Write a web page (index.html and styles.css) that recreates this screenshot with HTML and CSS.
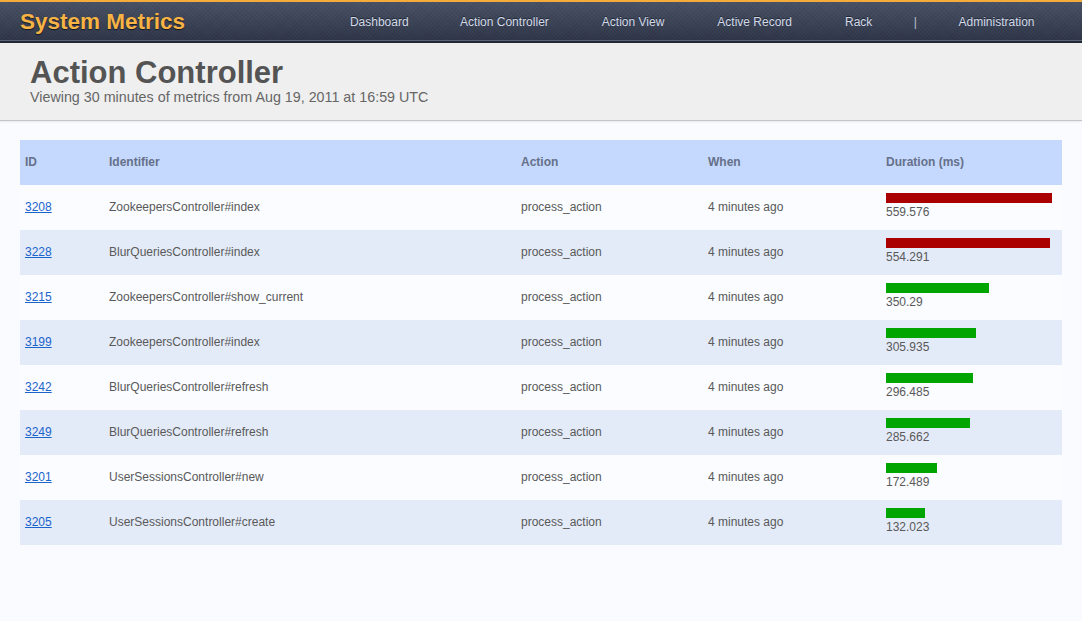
FILE: index.html
```html
<!DOCTYPE html>
<html>
<head>
<meta charset="utf-8">
<title>System Metrics</title>
<link rel="stylesheet" href="styles.css">
</head>
<body>
<div class="topbar">
  <div class="logo">System Metrics</div>
  <nav class="nav">
    <a href="#">Dashboard</a>
    <a href="#">Action Controller</a>
    <a href="#">Action View</a>
    <a href="#">Active Record</a>
    <a href="#">Rack</a>
    <span class="sep">|</span>
    <a href="#">Administration</a>
  </nav>
</div>
<header class="page-header">
  <h1>Action Controller</h1>
  <p>Viewing 30 minutes of metrics from Aug 19, 2011 at 16:59 UTC</p>
</header>
<main class="content">
  <table class="metrics">
    <thead>
      <tr>
        <th class="c-id">ID</th>
        <th class="c-ident">Identifier</th>
        <th class="c-action">Action</th>
        <th class="c-when">When</th>
        <th class="c-dur">Duration (ms)</th>
      </tr>
    </thead>
    <tbody>
      <tr>
        <td><a href="#">3208</a></td>
        <td>ZookeepersController#index</td>
        <td>process_action</td>
        <td>4 minutes ago</td>
        <td class="dur"><div class="bar slow" style="width:166px"></div><div class="val">559.576</div></td>
      </tr>
      <tr>
        <td><a href="#">3228</a></td>
        <td>BlurQueriesController#index</td>
        <td>process_action</td>
        <td>4 minutes ago</td>
        <td class="dur"><div class="bar slow" style="width:164px"></div><div class="val">554.291</div></td>
      </tr>
      <tr>
        <td><a href="#">3215</a></td>
        <td>ZookeepersController#show_current</td>
        <td>process_action</td>
        <td>4 minutes ago</td>
        <td class="dur"><div class="bar" style="width:103px"></div><div class="val">350.29</div></td>
      </tr>
      <tr>
        <td><a href="#">3199</a></td>
        <td>ZookeepersController#index</td>
        <td>process_action</td>
        <td>4 minutes ago</td>
        <td class="dur"><div class="bar" style="width:90px"></div><div class="val">305.935</div></td>
      </tr>
      <tr>
        <td><a href="#">3242</a></td>
        <td>BlurQueriesController#refresh</td>
        <td>process_action</td>
        <td>4 minutes ago</td>
        <td class="dur"><div class="bar" style="width:87px"></div><div class="val">296.485</div></td>
      </tr>
      <tr>
        <td><a href="#">3249</a></td>
        <td>BlurQueriesController#refresh</td>
        <td>process_action</td>
        <td>4 minutes ago</td>
        <td class="dur"><div class="bar" style="width:84px"></div><div class="val">285.662</div></td>
      </tr>
      <tr>
        <td><a href="#">3201</a></td>
        <td>UserSessionsController#new</td>
        <td>process_action</td>
        <td>4 minutes ago</td>
        <td class="dur"><div class="bar" style="width:51px"></div><div class="val">172.489</div></td>
      </tr>
      <tr>
        <td><a href="#">3205</a></td>
        <td>UserSessionsController#create</td>
        <td>process_action</td>
        <td>4 minutes ago</td>
        <td class="dur"><div class="bar" style="width:39px"></div><div class="val">132.023</div></td>
      </tr>
    </tbody>
  </table>
</main>
</body>
</html>
```

FILE: styles.css
```css
* { box-sizing: border-box; }

html, body {
  margin: 0;
  padding: 0;
}

body {
  background: #f9fbff;
  font-family: "Liberation Sans", Arial, sans-serif;
  color: #555;
  min-height: 621px;
}

.topbar {
  display: flex;
  align-items: center;
  justify-content: space-between;
  height: 43px;
  border-top: 2px solid #f4ab3a;
  border-bottom: 2px solid #242a35;
  box-shadow: inset 0 -1px 0 #5b6475;
  background-color: #3d4556;
  background-image:
    repeating-linear-gradient(45deg, rgba(0,0,0,0.05) 0 1px, transparent 1px 3px),
    repeating-linear-gradient(-45deg, rgba(0,0,0,0.05) 0 1px, transparent 1px 3px),
    linear-gradient(#4b5467, #30374a);
  padding: 0 21px 0 20px;
}

.logo {
  font-size: 22.5px;
  font-weight: bold;
  color: #f7b445;
  text-shadow: 0 1px 1px #151920;
  line-height: 39px;
}

.nav {
  display: flex;
  align-items: center;
  font-size: 12px;
}

.nav a {
  color: #d3dbea;
  text-decoration: none;
  padding: 0 26.5px;
  text-shadow: 0 -1px 0 #222833;
}

.nav a:first-child {
  padding-right: 25px;
}

.nav .sep {
  color: #b6bfd0;
  padding: 0 15px 0 15px;
}

.page-header {
  background: #efefef;
  border-bottom: 1px solid #c4c4c4;
  box-shadow: 0 1px 2px rgba(0,0,0,0.08);
  padding: 14px 30px 12px;
  height: 78px;
}

.page-header h1 {
  margin: 0;
  font-size: 31px;
  line-height: 32px;
  font-weight: bold;
  color: #545454;
}

.page-header p {
  margin: 0;
  font-size: 14.3px;
  line-height: 17px;
  color: #666;
}

.content {
  padding: 19px 20px 20px;
}

.metrics {
  width: 1042px;
  border-collapse: collapse;
  font-size: 12px;
  table-layout: fixed;
}

.metrics th {
  background: #c4d9fd;
  color: #66708a;
  font-weight: bold;
  text-align: left;
  height: 45px;
  padding: 0 5px 1px;
}

.metrics td {
  height: 45px;
  padding: 0 5px 1px;
  color: #595959;
  vertical-align: middle;
}

.c-id { width: 84px; }
.c-ident { width: 412px; }
.c-action { width: 187px; }
.c-when { width: 178px; }
.c-dur { width: 181px; }

.metrics tbody tr:nth-child(odd) td { background: #fafcff; }
.metrics tbody tr:nth-child(even) td { background: #e4ebf8; }

.metrics a {
  color: #1a64cc;
  text-decoration: underline;
}

.metrics td.dur {
  vertical-align: top;
  padding-top: 8px;
}

.bar {
  height: 10px;
  background: #00a500;
}

.bar.slow {
  background: #aa0000;
}

.val {
  line-height: 15px;
  margin-top: 2px;
}
```
